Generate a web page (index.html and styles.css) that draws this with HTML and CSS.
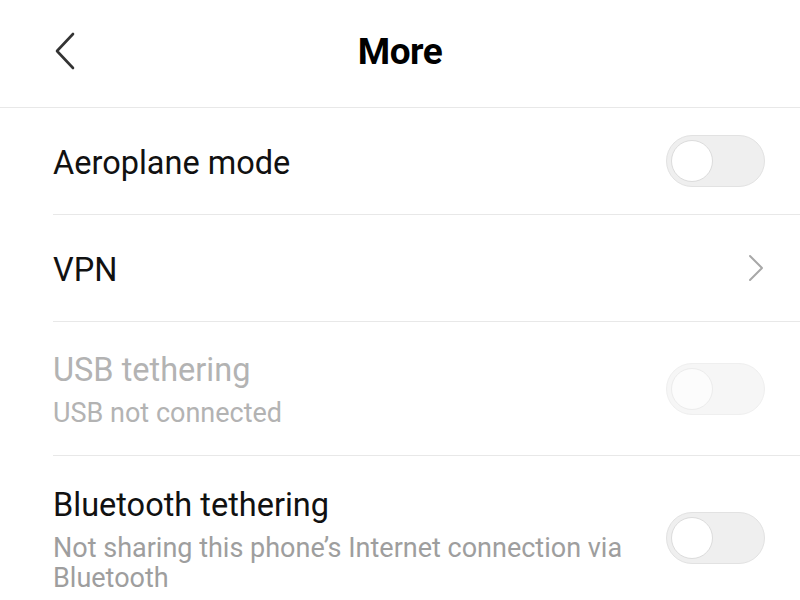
FILE: index.html
```html
<!DOCTYPE html>
<html>
<head>
<meta charset="utf-8">
<link rel="stylesheet" href="styles.css">
</head>
<body>
<div class="screen">
  <header class="topbar">
    <span class="back">
      <svg width="24" height="40" viewBox="0 0 24 40"><path d="M20 3 L4 20 L20 37" fill="none" stroke="#333" stroke-width="2.6" stroke-linecap="round" stroke-linejoin="round"/></svg>
    </span>
    <h1 class="title">More</h1>
  </header>
  <div class="list">
    <div class="row">
      <div class="texts"><div class="label">Aeroplane mode</div></div>
      <div class="toggle"><div class="knob"></div></div>
    </div>
    <div class="row">
      <div class="texts"><div class="label">VPN</div></div>
      <span class="chev">
        <svg width="18" height="30" viewBox="0 0 18 30"><path d="M3 3 L15 15 L3 27" fill="none" stroke="#a8a8a8" stroke-width="2" stroke-linecap="round" stroke-linejoin="round"/></svg>
      </span>
    </div>
    <div class="row tall disabled">
      <div class="texts"><div class="label">USB tethering</div><div class="sub">USB not connected</div></div>
      <div class="toggle"><div class="knob"></div></div>
    </div>
    <div class="row tall last">
      <div class="texts"><div class="label">Bluetooth tethering</div><div class="sub">Not sharing this phone’s Internet connection via Bluetooth</div></div>
      <div class="toggle"><div class="knob"></div></div>
    </div>
  </div>
</div>
</body>
</html>
```
FILE: styles.css
```css
html, body { margin: 0; padding: 0; background: #fff; }
body { font-family: Roboto, "Noto Sans", sans-serif; width: 800px; height: 600px; overflow: hidden; }
.topbar {
  height: 107px;
  border-bottom: 1px solid #e8e8e8;
  display: flex;
  align-items: center;
  justify-content: center;
  position: relative;
}
.back { position: absolute; left: 53px; top: 31px; }
.title { margin: 0; font-size: 37px; font-weight: 700; color: #000; letter-spacing: -0.5px; transform: translateY(-2px); }
.list { padding-left: 53px; }
.row {
  display: flex;
  align-items: center;
  justify-content: space-between;
  height: 106px;
  border-bottom: 1px solid #e8e8e8;
  padding-right: 35px;
}
.row.tall { height: 133px; }
.row.last { border-bottom: none; height: 150px; align-items: flex-start; padding-top: 30px; box-sizing: border-box; }
.texts { flex: 1; }
.label { font-size: 32.5px; color: #111; line-height: 38px; }
.row:not(.tall) .label { transform: translateY(2px); }
.sub { font-size: 27px; color: #9e9e9e; line-height: 30px; margin-top: 9px; max-width: 600px; }
.disabled .texts { transform: translateY(1px); }
.disabled .label { color: #b3b3b3; }
.disabled .sub { color: #b3b3b3; }
.toggle {
  width: 99px; height: 52px;
  box-sizing: border-box;
  border-radius: 26px;
  background: #efefef;
  border: 1px solid #e2e2e2;
  padding: 4px;
  flex: none;
}
.knob {
  width: 42px; height: 42px;
  box-sizing: border-box;
  border-radius: 50%;
  background: #fff;
  border: 1px solid #dcdcdc;
}
.disabled .toggle { background: #f6f6f6; border-color: #efefef; }
.disabled .knob { border-color: #ececec; background: #fcfcfc; }
.last .toggle { margin-top: 26px; }
.chev { display: flex; }
```
